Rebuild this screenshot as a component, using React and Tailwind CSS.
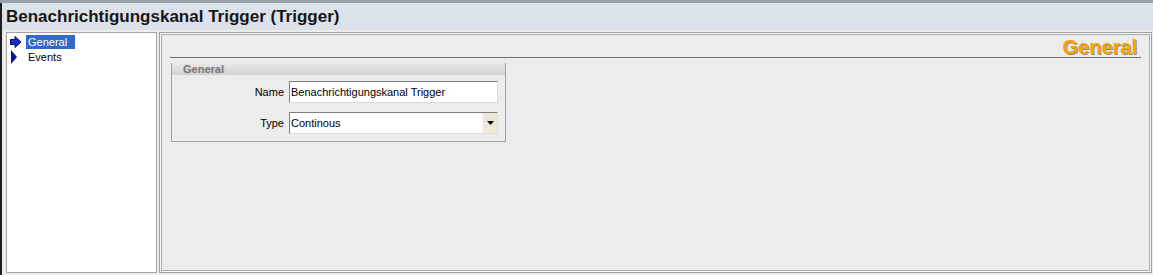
import React from "react";

const ui = { fontFamily: '"Liberation Sans", Arial, sans-serif' };

// Solid block arrow for the selected tree node
const ArrowIcon = () => (
  <svg width="12" height="12" viewBox="0 0 12 12" className="shrink-0">
    <path d="M0.5 3.5 H5 V0.5 L11 6 L5 11.5 V8.5 H0.5 Z" fill="#1c2fc4" stroke="#0a1060" strokeWidth="1" />
  </svg>
);

// Plain triangle for unselected nodes
const TriangleIcon = () => (
  <svg width="12" height="14" viewBox="0 0 12 14" className="shrink-0">
    <path d="M1 0 L7 7 L1 14 Z" fill="#0c139e" />
  </svg>
);

const TreeItem = ({ label, selected }) => (
  <div className="flex items-center h-[15px] pl-[3px]">
    <div className="w-[16px] flex items-center">{selected ? <ArrowIcon /> : <TriangleIcon />}</div>
    <span
      className={`px-[2px] h-[14px] leading-[14px] text-[11px] ${
        selected ? "bg-[#316ac5] text-white pr-[8px]" : "text-black"
      }`}
    >
      {label}
    </span>
  </div>
);

const Field = ({ label, children }) => (
  <div className="flex items-center">
    <div className="w-[117px] text-right text-[11px] text-black pr-[5px]">{label}</div>
    {children}
  </div>
);

const inputBox =
  "h-[22px] w-[209px] bg-white border border-t-[#7f7f7f] border-l-[#7f7f7f] border-r-[#dcdcdc] border-b-[#dcdcdc] flex items-center text-[11px] text-black";

export default function App() {
  return (
    <div className="w-[1153px] h-[275px] bg-[#ececec] flex flex-col overflow-hidden" style={ui}>
      <div className="h-[3px] bg-[#98a2ae]" />
      <div className="flex-1 flex flex-col border-l-2 border-[#1e1e1e]">
        {/* Title bar */}
        <div className="h-[27px] bg-[#dce2ea] flex items-center pl-[4px]">
          <span className="text-[17px] font-bold text-[#161616] leading-none">
            Benachrichtigungskanal Trigger (Trigger)
          </span>
        </div>

        <div className="flex-1 flex pt-[2px] pb-[2px] pl-[4px] pr-[1px] gap-[2px]">
          {/* Tree */}
          <div className="w-[151px] bg-white border border-[#a3a3a3] pt-px">
            <TreeItem label="General" selected />
            <TreeItem label="Events" />
          </div>

          {/* Detail panel */}
          <div className="flex-1 border border-[#a0a0a0] bg-[#f7f7f7] p-px">
            <div className="h-full border border-[#acacac] bg-[#ececec] px-[8px] pt-[1px]">
              <div className="border-b border-[#707070] text-right pr-[4px] h-[22px]">
                <span className="text-[20px] font-bold leading-[22px] text-[#f5a300] [text-shadow:1px_1px_0_#8a8a8a]">
                  General
                </span>
              </div>

              <div className="ml-px mt-[5px] w-[335px] border border-t-0 border-[#a0a0a0]">
                <div className="h-[12px] bg-gradient-to-b from-[#e8e8e8] to-[#d2d2d2] pl-[11px] flex items-center">
                  <span className="text-[11px] font-bold leading-none text-[#7a7a7a] [text-shadow:1px_1px_0_#c8c8c8]">
                    General
                  </span>
                </div>
                <div className="flex flex-col gap-[9px] pt-[6px] pb-[7px]">
                  <Field label="Name">
                    <div className={inputBox}>
                      <span className="pl-[1px]">Benachrichtigungskanal Trigger</span>
                    </div>
                  </Field>
                  <Field label="Type">
                    <div className={`${inputBox} justify-between`}>
                      <span className="pl-[1px]">Continous</span>
                      <div className="h-[20px] w-[15px] bg-[#ece9d8] border-l border-[#f8f8f4] flex items-center justify-center">
                        <svg width="7" height="4" viewBox="0 0 7 4">
                          <path d="M0 0 H7 L3.5 4 Z" fill="#000" />
                        </svg>
                      </div>
                    </div>
                  </Field>
                </div>
              </div>
            </div>
          </div>
        </div>
      </div>
    </div>
  );
}
